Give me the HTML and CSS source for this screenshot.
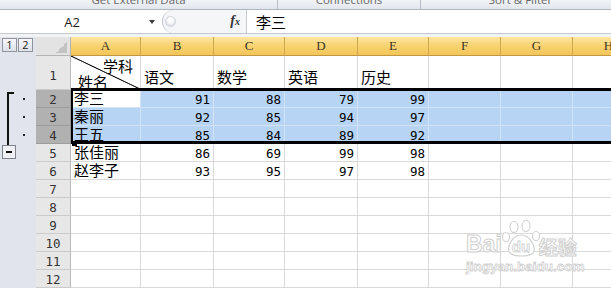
FILE: index.html
```html
<!DOCTYPE html>
<html>
<head>
<meta charset="utf-8">
<link rel="stylesheet" href="styles.css">
</head>
<body>
<div class="ribbon">
  <div class="rgroup g1"><span>Get External Data</span></div>
  <div class="rgroup g2"><span>Connections</span></div>
  <div class="rgroup g3"><span>Sort &amp; Filter</span></div>
</div>
<div class="fbar">
  <div class="namebox"><span class="ref">A2</span><span class="arrow"></span></div>
  <div class="mid"><span class="dimple"></span><span class="fx">f<span class="fxx">x</span></span></div>
  <div class="finput">李三</div>
</div>
<div class="strip"></div>
<div class="sheet">
  <div class="outline">
    <div class="ol-head"><span class="olbtn">1</span><span class="olbtn">2</span></div>
    <div class="ol-r1"></div>
    <div class="ol-group">
      <div class="bracket"></div>
      <div class="dots"><div class="dotrow"><i></i></div><div class="dotrow"><i></i></div><div class="dotrow"><i></i></div></div>
    </div>
    <div class="ol-minus"><span class="minus"><i></i></span></div>
  </div>
  <div class="grid">
    <div class="row hdr">
      <div class="corner wrh"></div>
      <div class="ch wa">A</div><div class="ch wb">B</div><div class="ch wc">C</div><div class="ch wd">D</div><div class="ch we">E</div><div class="ch wf">F</div><div class="ch wg">G</div><div class="ch wh">H</div>
    </div>
    <div class="row r1">
      <div class="rh wrh">1</div>
      <div class="c wa diag"><span class="dtop">学科</span><span class="dbot">姓名</span></div>
      <div class="c wb t">语文</div><div class="c wc t">数学</div><div class="c wd t">英语</div><div class="c we t">历史</div>
      <div class="c wf"></div><div class="c wg"></div><div class="c wh"></div>
    </div>
    <div class="selgroup">
      <div class="row sel">
        <div class="rh wrh">2</div>
        <div class="c wa act t">李三</div>
        <div class="c wb n">91</div><div class="c wc n">88</div><div class="c wd n">79</div><div class="c we n">99</div>
        <div class="c wf"></div><div class="c wg"></div><div class="c wh"></div>
      </div>
      <div class="row sel">
        <div class="rh wrh">3</div>
        <div class="c wa t">秦丽</div>
        <div class="c wb n">92</div><div class="c wc n">85</div><div class="c wd n">94</div><div class="c we n">97</div>
        <div class="c wf"></div><div class="c wg"></div><div class="c wh"></div>
      </div>
      <div class="row sel">
        <div class="rh wrh">4</div>
        <div class="c wa t">王五</div>
        <div class="c wb n">85</div><div class="c wc n">84</div><div class="c wd n">89</div><div class="c we n">92</div>
        <div class="c wf"></div><div class="c wg"></div><div class="c wh"></div>
      </div>
    </div>
    <div class="row">
      <div class="rh wrh">5</div>
      <div class="c wa t">张佳丽</div>
      <div class="c wb n">86</div><div class="c wc n">69</div><div class="c wd n">99</div><div class="c we n">98</div>
      <div class="c wf"></div><div class="c wg"></div><div class="c wh"></div>
    </div>
    <div class="row">
      <div class="rh wrh">6</div>
      <div class="c wa t">赵李子</div>
      <div class="c wb n">93</div><div class="c wc n">95</div><div class="c wd n">97</div><div class="c we n">98</div>
      <div class="c wf"></div><div class="c wg"></div><div class="c wh"></div>
    </div>
    <div class="row"><div class="rh wrh">7</div><div class="c wa"></div><div class="c wb"></div><div class="c wc"></div><div class="c wd"></div><div class="c we"></div><div class="c wf"></div><div class="c wg"></div><div class="c wh"></div></div>
    <div class="row"><div class="rh wrh">8</div><div class="c wa"></div><div class="c wb"></div><div class="c wc"></div><div class="c wd"></div><div class="c we"></div><div class="c wf"></div><div class="c wg"></div><div class="c wh"></div></div>
    <div class="row"><div class="rh wrh">9</div><div class="c wa"></div><div class="c wb"></div><div class="c wc"></div><div class="c wd"></div><div class="c we"></div><div class="c wf"></div><div class="c wg"></div><div class="c wh"></div></div>
    <div class="row"><div class="rh wrh">10</div><div class="c wa"></div><div class="c wb"></div><div class="c wc"></div><div class="c wd"></div><div class="c we"></div><div class="c wf"></div><div class="c wg"></div><div class="c wh"></div></div>
    <div class="row"><div class="rh wrh">11</div><div class="c wa"></div><div class="c wb"></div><div class="c wc"></div><div class="c wd"></div><div class="c we"></div><div class="c wf"></div><div class="c wg"></div><div class="c wh"></div></div>
    <div class="row"><div class="rh wrh">12</div><div class="c wa"></div><div class="c wb"></div><div class="c wc"></div><div class="c wd"></div><div class="c we"></div><div class="c wf"></div><div class="c wg"></div><div class="c wh"></div></div>
  </div>
</div>
<div class="watermark">
  <div class="wm-top">
    <span class="wm-bai">Bai</span>
    <svg class="paw" width="40" height="38" viewBox="0 0 40 38">
      <g fill="#fff" stroke="#d2d2d2" stroke-width="1.2">
        <ellipse cx="12" cy="7" rx="4" ry="5.5"/>
        <ellipse cx="24" cy="6" rx="4" ry="5.5"/>
        <ellipse cx="4" cy="17" rx="3.5" ry="4.5"/>
        <ellipse cx="34" cy="16" rx="3.5" ry="4.5"/>
        <path d="M19 15 C10 15 4 28 8 33 C12 37 27 37 31 33 C35 28 28 15 19 15 Z"/>
      </g>
      <text x="19" y="32" text-anchor="middle" font-family="Liberation Sans, sans-serif" font-weight="bold" font-size="15" fill="#fff" stroke="#d2d2d2" stroke-width="0.9">du</text>
    </svg>
    <span class="wm-jy">经验</span>
  </div>
  <div class="wm-url">jingyan.baidu.com</div>
</div>
</body>
</html>
```

FILE: styles.css
```css
* { box-sizing: border-box; margin: 0; padding: 0; }
html, body { width: 611px; height: 289px; overflow: hidden; background: #fff; }
body { position: relative; font-family: "Noto Sans CJK SC", sans-serif; color: #000; }

/* ribbon strip */
.ribbon { display: flex; height: 10px; overflow: hidden; background: linear-gradient(#f1f3f6, #e2e6ec); border-bottom: 1px solid #aeb5c0; }
.rgroup { flex: none; display: flex; justify-content: center; border-right: 1px solid #b7bec8; overflow: hidden; }
.rgroup span { font: 11.5px/12px "Open Sans", sans-serif; color: #6a6a6a; margin-top: -6px; white-space: nowrap; }
.g1 { width: 278px; }
.g2 { width: 143px; }
.g3 { width: 200px; }

/* formula bar */
.fbar { display: flex; height: 24px; background: #fff; border-bottom: 1px solid #c4c9d1; }
.namebox { flex: none; width: 162px; display: flex; align-items: center; }
.ref { width: 144px; text-align: center; font: 13px/16px "Open Sans", sans-serif; color: #1e1e1e; }
.arrow { margin-left: 5px; width: 0; height: 0; border-left: 3.5px solid transparent; border-right: 3.5px solid transparent; border-top: 4px solid #3c3c3c; }
.mid { flex: none; width: 85px; display: flex; align-items: center; justify-content: space-between; background: #f5f6f8; border-left: 1px solid #bfc4cc; border-right: 1px solid #c6cad1; border-radius: 12px 0 0 12px; padding: 0 6px 0 2px; }
.dimple { width: 11px; height: 11px; border-radius: 50%; background: radial-gradient(circle at 50% 35%, #ffffff 30%, #dfe2e7 70%); border: 1px solid #cfd3d9; }
.fx { font: italic bold 14px/16px "Liberation Serif", serif; color: #333; }
.fxx { font-size: 10px; }
.finput { flex: 1; padding-left: 9px; font-size: 15px; line-height: 23px; }

.strip { height: 3px; background: #f2f3f5; }

/* sheet */
.sheet { display: flex; }
.outline { flex: none; width: 36px; background: #e1e4ec; display: flex; flex-direction: column; }
.ol-head { height: 19px; display: flex; gap: 1px; padding: 1px 0 0 2px; }
.olbtn { width: 15px; height: 14px; border: 1px solid #8f939b; background: linear-gradient(#f7f8fa, #dde1e9); font: 11px/12px "Open Sans", sans-serif; color: #222; text-align: center; }
.ol-r1 { height: 34px; }
.ol-group { height: 54px; display: flex; }
.bracket { margin: 2px 0 0 7px; width: 7px; height: 53px; border-left: 2px solid #111; border-top: 2px solid #111; }
.dots { width: 20px; display: flex; flex-direction: column; }
.dotrow { height: 18px; display: flex; align-items: center; justify-content: center; }
.dotrow i { width: 2px; height: 2px; background: #222; }
.ol-minus { height: 18px; padding: 1px 0 0 2px; }
.minus { width: 14px; height: 14px; border: 1px solid #7f848c; background: #f0f1f4; display: flex; align-items: center; justify-content: center; }
.minus i { width: 6px; height: 2px; background: #111; }

.grid { flex: none; display: flex; flex-direction: column; }
.row { display: flex; height: 18px; }
.row.hdr { height: 19px; }
.row.r1 { height: 34px; }

.wrh { width: 35px; }
.wa { width: 70px; }
.wb { width: 73px; }
.wc { width: 71px; }
.wd { width: 73px; }
.we { width: 71px; }
.wf { width: 72px; }
.wg { width: 72px; }
.wh { width: 72px; }

.row > div { flex: none; }

.corner { background-color: #e3e3e3; background-image: linear-gradient(135deg, transparent 50%, #c3c3c3 50%); background-size: 11px 11px; background-position: right 3px bottom 2px; background-repeat: no-repeat; border-right: 1px solid #b4b4b4; border-bottom: 1px solid #b4b4b4; }
.ch { background: linear-gradient(#fde6a4, #f8d26f 50%, #f3c55a); border-right: 1px solid #d0a84c; border-bottom: 1px solid #bf9840; text-align: center; font: 13px/18px "Liberation Serif", serif; color: #3b3424; }

.rh { background: #e7e7e7; border-right: 1px solid #b9b9b9; border-bottom: 1px solid #cbcbcb; text-align: center; font: 12.5px/17px "DejaVu Sans Mono", monospace; color: #333; padding-top: 1px; }
.r1 .rh { display: flex; align-items: flex-end; justify-content: center; padding-bottom: 5px; }
.sel .rh { background: #b1b1b1; border-bottom-color: #9d9d9d; border-right-color: #9a9a9a; }

.c { border-right: 1px solid #d9d9d9; border-bottom: 1px solid #d9d9d9; padding: 0 3px; white-space: nowrap; overflow: hidden; }
.t { font-size: 15px; line-height: 15px; }
.r1 .t { display: flex; align-items: flex-end; padding-bottom: 4px; line-height: 17px; }
.n { text-align: right; font: 12.5px/17px "DejaVu Sans Mono", monospace; padding-top: 1px; }
.sel .c { background: #b8d4f4; border-color: #d2e2f7; }
.sel .c.act { background: #fff; }

.diag { display: flex; flex-direction: column; justify-content: space-between; padding: 2px 7px 0 7px; font-size: 15px; line-height: 15px; background-image: linear-gradient(to top right, transparent calc(50% - 0.9px), #1a1a1a calc(50% - 0.2px), #1a1a1a calc(50% + 0.2px), transparent calc(50% + 0.9px)); }
.dtop { align-self: flex-end; }
.dbot { align-self: flex-start; }

/* selection rectangle over rows 2-4 */
.selgroup { position: relative; }
.selgroup::after { content: ""; position: absolute; left: 35px; right: 0; top: -2px; bottom: 0; border-top: 3px solid #000; border-bottom: 3px solid #000; border-left: 2px solid #000; pointer-events: none; }
.selgroup::before { content: ""; position: absolute; left: 36px; bottom: -2px; width: 5px; height: 5px; background: #000; z-index: 1; }

/* watermark */
.watermark { position: absolute; left: 466px; top: 220px; display: flex; flex-direction: column; align-items: flex-start; }
.wm-top { display: flex; align-items: flex-end; height: 38px; }
.wm-bai { font: bold 23px/23px "Liberation Sans", sans-serif; color: #fff; -webkit-text-stroke: 1px #d0d0d0; margin-bottom: 2px; }
.paw { display: block; }
.wm-jy { font-size: 19px; line-height: 22px; font-weight: bold; color: #fff; -webkit-text-stroke: 1px #d0d0d0; margin-left: -3px; }
.wm-url { margin-top: 2px; font: bold 13.5px/14px "Liberation Sans", sans-serif; color: #fff; -webkit-text-stroke: 0.8px #d0d0d0; }
```
